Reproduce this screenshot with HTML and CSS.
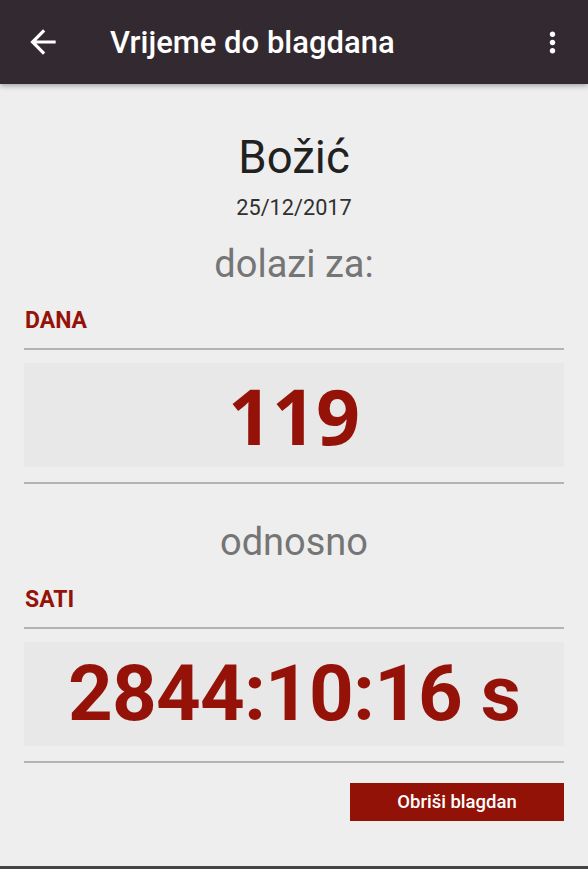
FILE: index.html
```html
<!DOCTYPE html>
<html lang="hr">
<head>
<meta charset="utf-8">
<title>Vrijeme do blagdana</title>
<link rel="stylesheet" href="styles.css">
</head>
<body>
<header class="appbar">
  <svg class="icon-back" viewBox="0 0 24 24" width="38" height="38"><path fill="#fff" d="M20 11H7.83l5.59-5.59L12 4l-8 8 8 8 1.41-1.41L7.83 13H20v-2z"/></svg>
  <h1 class="appbar-title">Vrijeme do blagdana</h1>
  <svg class="icon-more" viewBox="0 0 24 24" width="33" height="33"><path fill="#fff" d="M12 8c1.1 0 2-.9 2-2s-.9-2-2-2-2 .9-2 2 .9 2 2 2zm0 2c-1.1 0-2 .9-2 2s.9 2 2 2 2-.9 2-2-.9-2-2-2zm0 6c-1.1 0-2 .9-2 2s.9 2 2 2 2-.9 2-2-.9-2-2-2z"/></svg>
</header>
<main class="content">
  <div class="holiday">
    <div class="holiday-name">Božić</div>
    <div class="holiday-date">25/12/2017</div>
    <div class="subtitle">dolazi za:</div>
  </div>
  <div class="label">DANA</div>
  <div class="rule"></div>
  <div class="value-box"><span class="value value-days">119</span></div>
  <div class="rule"></div>
  <div class="subtitle subtitle-or">odnosno</div>
  <div class="label label-hours">SATI</div>
  <div class="rule"></div>
  <div class="value-box"><span class="value value-hours">2844:10:16 s</span></div>
  <div class="rule"></div>
  <div class="actions"><button class="btn-delete">Obriši blagdan</button></div>
</main>
<div class="navbar-edge"></div>
</body>
</html>
```
FILE: styles.css
```css
html, body {
  margin: 0;
  padding: 0;
}
body {
  width: 588px;
  height: 869px;
  background: #eeeeee;
  font-family: Roboto, "Noto Sans", sans-serif;
  display: flex;
  flex-direction: column;
  overflow: hidden;
}
.appbar {
  height: 84px;
  flex: none;
  background: #332a31;
  display: flex;
  align-items: center;
  box-shadow: 0 2px 5px rgba(0,0,0,0.3);
  position: relative;
  z-index: 1;
}
.icon-back {
  margin-left: 24px;
  display: block;
}
.appbar-title {
  margin: 0 0 0 48px;
  font-size: 31px;
  font-weight: 500;
  color: #ffffff;
  flex: 1;
  line-height: 1;
}
.icon-more {
  margin-right: 19px;
  display: block;
}
.content {
  flex: 1;
  padding: 0 24px;
  display: flex;
  flex-direction: column;
}
.holiday {
  display: flex;
  flex-direction: column;
  align-items: center;
  margin-top: 48px;
}
.holiday-name {
  font-size: 45.5px;
  line-height: 52px;
  color: #212121;
}
.holiday-date {
  font-size: 21.7px;
  line-height: 24px;
  color: #303030;
  margin-top: 12px;
}
.subtitle {
  font-size: 38px;
  line-height: 44px;
  color: #757575;
  text-align: center;
  margin-top: 22px;
}
.subtitle-or {
  margin-top: 36px;
}
.label {
  font-size: 23px;
  line-height: 22px;
  font-weight: 700;
  color: #941208;
  margin-top: 24px;
  margin-left: 1px;
}
.label-hours {
  margin-top: 25px;
}
.rule {
  height: 2px;
  background: #b3b3b3;
}
.label + .rule {
  margin-top: 16px;
}
.value-box + .rule {
  margin-top: 15px;
}
.value-box {
  margin-top: 13px;
  background: #e8e8e8;
  height: 104px;
  display: flex;
  align-items: center;
  justify-content: center;
}
.value {
  color: #941208;
  font-weight: 700;
  line-height: 1;
}
.value-days {
  font-family: "Open Sans", "Noto Sans", sans-serif;
  font-size: 77px;
}
.value-hours {
  font-family: Roboto, sans-serif;
  font-size: 78px;
  letter-spacing: -0.8px;
}
.actions {
  display: flex;
  justify-content: flex-end;
  margin-top: 20px;
}
.btn-delete {
  width: 214px;
  height: 38px;
  border: none;
  background: #921207;
  color: #ffffff;
  font-family: Roboto, sans-serif;
  font-weight: 500;
  font-size: 18.5px;
  padding: 0;
}
.navbar-edge {
  height: 3px;
  flex: none;
  background: #444444;
}
```
